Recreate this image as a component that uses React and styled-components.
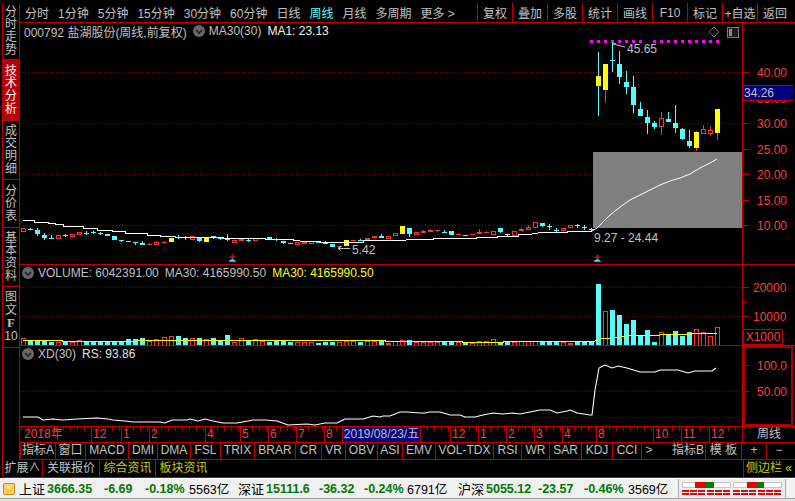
import React from 'react';
import styled, { createGlobalStyle } from 'styled-components';

const FONT = `"Liberation Sans", "Noto Sans CJK SC", sans-serif`;
const RED = '#c00000';
const GRID = '#900000';
const CYAN = '#54fcfc';
const TEXT = '#c0c0c0';
const LABEL_RED = '#ff3c3c';

const GlobalStyle = createGlobalStyle`
  html, body {
    margin: 0;
    background: #000;
  }
`;

const Screen = styled.div`
  width: 795px;
  height: 501px;
  overflow: hidden;
  background: #000;
  font-family: ${FONT};
  font-size: 12px;
  color: ${TEXT};
`;

const Workspace = styled.div`
  display: flex;
  height: 460px;
  padding-left: 2px;
  box-sizing: border-box;
`;

const Sidebar = styled.div`
  width: 18px;
  margin-top: 3px;
  box-sizing: border-box;
  border-left: 1px solid ${RED};
  border-right: 1px solid ${RED};
  flex: none;
`;

const SideTab = styled.div`
  height: ${(p) => p.$h}px;
  box-sizing: border-box;
  border-bottom: 1px solid ${RED};
  display: flex;
  flex-direction: column;
  align-items: center;
  justify-content: center;
  line-height: 12.6px;
  font-size: 12px;
  color: ${(p) => (p.$active ? '#fff' : TEXT)};
  background: ${(p) => (p.$active ? '#b80000' : 'transparent')};
`;

const SideBoldF = styled.span`
  font-family: "Liberation Serif", serif;
  font-weight: bold;
  font-size: 13px;
  line-height: 14px;
`;

const MainColumn = styled.div`
  flex: 1;
  padding-top: 3px;
  display: flex;
  flex-direction: column;
  min-width: 0;
`;

const Toolbar = styled.div`
  height: 20px;
  flex: none;
  box-sizing: border-box;
  border-bottom: 1px solid ${RED};
  display: flex;
  align-items: center;
  padding: 0 3px 0 5px;
`;

const PeriodList = styled.div`
  display: flex;
  gap: 9px;
`;

const Period = styled.span`
  color: ${(p) => (p.$active ? CYAN : TEXT)};
  white-space: nowrap;
`;

const ToolGroup = styled.div`
  margin-left: auto;
  display: flex;
  align-self: stretch;
`;

const ToolCell = styled.div`
  width: 35px;
  box-sizing: border-box;
  border-left: 1px solid ${RED};
  display: flex;
  align-items: center;
  justify-content: center;
  white-space: nowrap;
`;

const Pane = styled.div`
  height: ${(p) => p.$h}px;
  flex: none;
  box-sizing: border-box;
  border-bottom: 1px solid ${RED};
  display: flex;
`;

const ChartArea = styled.div`
  width: 722px;
  position: relative;
  flex: none;
`;

const ChartSvg = styled.svg`
  display: block;
`;

const PaneHeader = styled.div`
  position: absolute;
  top: 0;
  left: 2px;
  height: 16px;
  display: flex;
  align-items: center;
  gap: 6px;
  white-space: nowrap;
`;

const ChevronSvg = styled.svg`
  display: block;
  margin-right: -2px;
`;

const HeadText = styled.span`
  color: ${(p) => p.$color || TEXT};
  margin-left: ${(p) => p.$gap || 0}px;
`;

const Axis = styled.div`
  flex: 1;
  box-sizing: border-box;
  border-left: 1px solid ${RED};
  position: relative;
`;

const PriceTag = styled.div`
  position: absolute;
  left: 0;
  right: 2px;
  top: 62px;
  height: 16px;
  box-sizing: border-box;
  background: #000080;
  border-top: 1px solid ${RED};
  border-bottom: 1px solid ${RED};
  padding-left: 1px;
  line-height: 14px;
`;

const ScaleBadge = styled.div`
  position: absolute;
  left: 0;
  bottom: 0;
  width: 40px;
  height: 16px;
  box-sizing: border-box;
  border: 1px solid ${RED};
  color: ${LABEL_RED};
  text-align: center;
  line-height: 14px;
`;

const AxisFrame = styled.div`
  position: absolute;
  left: 0;
  right: 2px;
  top: 0;
  bottom: 0;
  border: 2px solid #a80000;
`;

const AxisLabel = styled.text`
  fill: ${LABEL_RED};
  font-family: ${FONT};
  font-size: 12px;
`;

const Note = styled.text`
  fill: ${TEXT};
  font-family: ${FONT};
  font-size: 12px;
`;

const DateRow = styled.div`
  height: 16px;
  flex: none;
  box-sizing: border-box;
  border-bottom: 1px solid ${RED};
  display: flex;
`;

const DateScale = styled.div`
  width: 722px;
  flex: none;
  display: flex;
  background: repeating-linear-gradient(90deg, ${RED} 0 1px, transparent 1px 7px) 1px 0 / 100% 4px no-repeat;
`;

const DateCell = styled.div`
  width: ${(p) => p.$w}px;
  flex: none;
  box-sizing: border-box;
  border-left: ${(p) => (p.$first ? 'none' : `1px solid ${RED}`)};
  padding-left: ${(p) => (p.$first ? 4 : 1)}px;
  color: ${LABEL_RED};
  line-height: 15px;
  white-space: nowrap;
`;

const DateCursor = styled(DateCell)`
  background: #000080;
  color: ${TEXT};
  text-align: center;
  padding-left: 0;
`;

const PeriodCell = styled.div`
  flex: 1;
  border-left: 1px solid ${RED};
  text-align: center;
  line-height: 15px;
`;

const TabRow = styled.div`
  height: 17px;
  flex: none;
  box-sizing: border-box;
  border-bottom: 1px solid ${RED};
  display: flex;
`;

const TabCell = styled.div`
  width: ${(p) => p.$w}px;
  flex: none;
  box-sizing: border-box;
  border-left: 1px solid ${RED};
  text-align: center;
  line-height: 15px;
  white-space: nowrap;
`;

const TabSpacer = styled.div`
  flex: none;
  width: ${(p) => p.$w}px;
  box-sizing: border-box;
  text-align: right;
  padding-right: 1px;
  line-height: 15px;
`;

const ExtBar = styled.div`
  height: 18px;
  margin-left: 2px;
  box-sizing: border-box;
  border-bottom: 1px solid ${RED};
  display: flex;
`;

const ExtCell = styled.div`
  width: ${(p) => p.$w}px;
  flex: none;
  box-sizing: border-box;
  border-left: 1px solid ${RED};
  text-align: center;
  line-height: 16px;
  color: ${(p) => (p.$accent ? '#c8c800' : TEXT)};
  white-space: nowrap;
`;

const SideToggle = styled(ExtCell)`
  margin-left: auto;
  flex: 1;
  max-width: 51px;
  margin-right: 1px;
`;

const StatusBar = styled.div`
  height: 21px;
  box-sizing: border-box;
  background: #f0f0f0;
  border-top: 1px solid #fff;
  border-bottom: 1px solid #a0a0a0;
  display: flex;
  align-items: center;
  padding-left: 3px;
  color: #000;
  white-space: nowrap;
`;

const StatusEdge = styled.div`
  height: 2px;
  background: #e4e4e4;
`;

const StatusIcon = styled.div`
  width: 12px;
  height: 12px;
  flex: none;
  margin-right: 4px;
  box-sizing: border-box;
  border: 1px solid #c88a10;
  border-radius: 2px;
  background: linear-gradient(#ffe9a0, #f6b030);
  box-shadow: inset 0 0 0 2px #ffcf60;
`;

const Quote = styled.div`
  display: grid;
  grid-template-columns: ${(p) => p.$cols};
  align-items: center;
  flex: none;
`;

const QuoteName = styled.span`
  font-size: 13px;
`;

const QuoteNum = styled.span`
  color: #007800;
  font-weight: bold;
  font-size: 12.5px;
`;

const QuoteAmount = styled.span`
  font-size: 12.5px;
`;

const Breadth = styled.div`
  width: 108px;
  box-sizing: border-box;
  align-self: stretch;
  border-left: 1px solid #a8a8a8;
  border-right: 1px solid #a8a8a8;
  display: flex;
  gap: 2px;
  padding: 3px 0 0 3px;
`;

const Meter = styled.div`
  width: 49px;
`;

const MeterTop = styled.div`
  height: 6px;
  box-sizing: border-box;
  border: 1px solid #c8c8c8;
  background: #fff;
  display: flex;
  padding-left: ${(p) => p.$offset}px;
`;

const MeterPart = styled.div`
  height: 6px;
  margin-top: -1px;
  width: ${(p) => p.$w}px;
  background: ${(p) => p.$color};
`;

const MeterDashes = styled.div`
  height: 2px;
  margin-top: ${(p) => p.$gap}px;
  background: repeating-linear-gradient(90deg, #f00000 0 7px, transparent 7px 8.2px);
`;

const chars = (s) => [...s].map((ch, i) => <span key={i}>{ch}</span>);

// [kind, top, bottom, high, low, wick colour], y in page pixels
const CANDLES = [
  ['r', 228, 232], ['c', 229, 230, 228, 230], ['c', 230, 234, 228, 236], ['c', 235, 238, 233, 240], ['c', 238, 239, 235, 239],
  ['r', 235, 239], ['c', 235, 236, 234, 237], ['r', 234, 237], ['r', 232, 235], ['c', 233, 234, 231, 235],
  ['c', 232, 233, 231, 234], ['c', 233, 234, 232, 235], ['c', 234, 236], ['c', 236, 240], ['c', 240, 241, 240, 242],
  ['c', 241, 242], ['c', 242, 243, 242, 245], ['c', 243, 245, 241, 245], ['R', 244, 245, 243, 245], ['r', 242, 245, 241, 245],
  ['R', 242, 243, 241, 243], ['y', 238, 242], ['c', 237, 238, 235, 239], ['c', 237, 238, 236, 240], ['r', 236, 240],
  ['c', 237, 241, 237, 242], ['y', 238, 242], ['c', 236, 238, 236, 239], ['c', 237, 239, 237, 240], ['c', 238, 240, 234, 241],
  ['r', 240, 243], ['r', 239, 241], ['c', 240, 241, 238, 242], ['r', 238, 241], ['R', 238, 239], ['c', 237, 239],
  ['c', 239, 240, 238, 241], ['c', 241, 243, 241, 244], ['c', 243, 244], ['r', 242, 245],
  ['R', 242, 244], ['r', 241, 244], ['c', 241, 243], ['c', 243, 244, 241, 244], ['c', 244, 247], ['R', 246, 247, 246, 248],
  ['y', 240, 246], ['R', 240, 241], ['c', 240, 241, 239, 241], ['r', 238, 240], ['R', 236, 238, 236, 239], ['c', 236, 238, 234, 238],
  ['r', 236, 239], ['r', 233, 236], ['y', 226, 234], ['c', 228, 234, 228, 237], ['r', 232, 235], ['R', 231, 233, 230, 233],
  ['R', 230, 232, 229, 232], ['R', 230, 231, 230, 232], ['c', 232, 233, 230, 233], ['c', 231, 235], ['R', 234, 235], ['c', 235, 236],
  ['R', 234, 235], ['R', 232, 234, 229, 234], ['R', 232, 233, 231, 233], ['r', 231, 235], ['c', 228, 232, 228, 233], ['w', 234, 235, 234, 236],
  ['r', 231, 236], ['R', 229, 231, 228, 231], ['r', 227, 230, 225, 230], ['r', 222, 228], ['c', 223, 226, 223, 227],
  ['c', 226, 227, 224, 230], ['c', 230, 231, 228, 232], ['r', 228, 231], ['r', 225, 228], ['c', 225, 226, 224, 228],
  ['c', 227, 228, 225, 230], ['c', 229, 230, 228, 231],
  ['y', 76, 86, 52, 116, CYAN], ['y', 64, 90, 64, 103, '#ff3232'], ['c', 60, 61, 42, 72], ['c', 64, 77, 51, 84], ['c', 82, 87, 71, 94],
  ['c', 87, 105, 76, 113], ['c', 109, 116, 102, 116], ['c', 117, 123, 110, 134], ['c', 123, 127, 121, 129], ['r', 118, 127, 112, 135],
  ['c', 119, 122, 112, 122], ['c', 123, 128, 105, 133], ['c', 129, 139, 128, 140], ['c', 141, 146, 130, 148],
  ['y', 132, 148, 131, 151, '#ff3232'], ['r', 129, 134, 125, 134], ['r', 130, 134, 126, 136], ['y', 109, 133, 109, 140, '#ff3232'],
];

// volume bar tops; bars sit on y = 345
const VOLUMES = [
  ['r', 338], ['c', 341], ['c', 341], ['c', 341], ['c', 342], ['r', 342], ['c', 341], ['r', 342], ['r', 340], ['c', 341],
  ['c', 341], ['c', 341], ['c', 341], ['c', 341], ['c', 341], ['c', 339], ['c', 339], ['c', 338], ['r', 341], ['r', 339],
  ['r', 337], ['r', 336], ['c', 336], ['c', 338], ['r', 338], ['c', 338], ['r', 339], ['c', 338], ['c', 340], ['c', 335],
  ['r', 342], ['r', 338], ['c', 341], ['r', 339], ['r', 341], ['c', 342], ['c', 341], ['c', 341], ['c', 342], ['r', 342],
  ['r', 342], ['r', 342], ['c', 343], ['c', 342], ['c', 342], ['r', 342], ['r', 341], ['r', 341], ['c', 342], ['r', 341],
  ['r', 341], ['c', 341], ['R', 343], ['r', 341], ['r', 340], ['c', 340], ['r', 342], ['r', 342], ['r', 342], ['r', 342],
  ['c', 342], ['c', 342], ['r', 342], ['c', 343], ['r', 343], ['r', 341], ['r', 341], ['r', 339], ['c', 342], ['c', 341],
  ['r', 342], ['r', 341], ['r', 341], ['r', 341], ['c', 342], ['c', 342], ['c', 342], ['r', 342], ['R', 343], ['c', 342],
  ['c', 342], ['c', 342], ['c', 284], ['r', 311], ['c', 310], ['c', 315], ['c', 324], ['c', 320], ['c', 335], ['c', 330],
  ['c', 342], ['r', 332], ['c', 334], ['c', 331], ['c', 336], ['c', 332], ['r', 329], ['r', 332], ['r', 336], ['r', 327],
];

const toPoints = (list) => list.map((p) => p.join(',')).join(' ');

const MA_LINE = toPoints([
  [23, 220], [34, 220], [34, 222], [48, 222], [48, 223], [55, 223], [55, 224], [63, 224], [63, 226], [83, 226], [83, 228],
  [97, 228], [97, 230], [112, 230], [112, 231], [125, 231], [125, 233], [147, 233], [147, 235], [160, 235], [160, 236],
  [175, 236], [175, 237], [223, 237], [223, 238], [265, 238], [265, 239], [293, 239], [293, 240], [300, 241], [320, 241],
  [320, 242], [363, 242], [363, 241], [406, 240], [406, 239], [433, 239], [433, 238], [476, 238], [476, 237], [497, 237],
  [497, 236], [518, 236], [518, 235], [532, 234], [538, 233], [553, 232], [567, 232], [567, 231], [592, 231],
]);

const RISE_LINE = toPoints([
  [592, 231], [597, 228], [603, 222], [610, 215], [620, 207], [630, 200], [640, 195], [650, 190], [660, 185],
  [670, 181], [680, 178], [690, 174], [700, 168], [710, 163], [717, 159],
]);

const VOLUME_MA = toPoints([
  [23, 340], [62, 340], [62, 341], [137, 341], [137, 340], [385, 340], [385, 341], [462, 341], [462, 342], [503, 342],
  [503, 341], [595, 341], [600, 339], [610, 338], [620, 337], [625, 336], [635, 335], [660, 335], [665, 334.5], [690, 334.5],
  [692, 333], [717, 333],
]);

const XD_LINE = toPoints([
  [23, 417], [38, 417], [43, 420], [53, 419], [63, 420], [77, 419], [97, 418], [108, 419], [113, 420], [125, 421], [133, 422],
  [160, 422], [165, 423], [172, 420], [187, 420], [190, 419], [198, 421], [205, 419], [213, 421], [223, 423], [237, 423],
  [253, 420], [265, 420], [277, 421], [288, 425], [307, 424], [315, 425], [325, 423], [337, 423], [345, 419], [363, 419],
  [373, 416], [380, 417], [383, 416], [390, 416], [400, 412], [407, 412], [420, 413], [425, 413], [430, 412], [440, 412],
  [450, 415], [460, 415], [465, 417], [475, 417], [483, 415], [493, 413], [503, 414], [513, 413], [520, 414], [530, 412],
  [540, 410], [550, 410], [557, 413], [567, 411], [570, 410], [577, 413], [590, 415], [592, 415], [595, 390], [599, 368],
  [605, 365], [612, 368], [618, 366], [627, 368], [640, 372], [655, 372], [660, 370], [678, 370], [688, 373], [695, 371],
  [712, 371], [716, 368],
]);

const candleX = (i) => Math.round(23.3 + i * 7.01);

const FILL = { c: CYAN, y: '#ffff00', R: '#ff3232', w: '#fff' };

const Candle = ({ i, data }) => {
  const [kind, top, bottom, high, low, wick] = data;
  const x = candleX(i);
  const color = kind === 'r' ? '#ff3232' : FILL[kind];
  return (
    <g>
      {high !== undefined && (
        <rect x={x} y={high} width={1} height={low - high} fill={wick || color} />
      )}
      {kind === 'r' ? (
        <rect x={x - 1.5} y={top + 0.5} width={4} height={bottom - top - 1} fill="#000" stroke={color} />
      ) : (
        <rect x={x - 2} y={top} width={5} height={bottom - top} fill={color} />
      )}
    </g>
  );
};

const VolumeBar = ({ i, data }) => {
  const [kind, top] = data;
  const x = candleX(i);
  if (kind === 'r') {
    return <rect x={x - 1.5} y={top + 0.5} width={4} height={345 - top} fill="#000" stroke="#ff3232" />;
  }
  return <rect x={x - 2} y={top} width={5} height={346 - top} fill={FILL[kind]} />;
};

const GridLine = ({ y }) => (
  <line x1={20} x2={742} y1={y + 0.5} y2={y + 0.5} stroke={GRID} strokeDasharray="1 2" />
);

const Tick = ({ y, long }) => (
  <line x1={743} x2={long ? 749 : 747} y1={y + 0.5} y2={y + 0.5} stroke={RED} />
);

const Chevron = () => (
  <ChevronSvg width="12" height="12" viewBox="0 0 12 12">
    <circle cx="6" cy="6" r="6" fill="#666" />
    <polyline points="3,5 6,8 9,5" fill="none" stroke="#222" strokeWidth="1.6" />
  </ChevronSvg>
);

const Marker = ({ x }) => (
  <g>
    <polygon points={`${x},254 ${x + 3.5},258 ${x - 3.5},258`} fill="#d00000" />
    <polygon points={`${x},258 ${x + 4},262 ${x - 4},262`} fill="#2aa8e8" />
    <line x1={x - 3} x2={x + 3} y1={260.5} y2={260.5} stroke={CYAN} strokeDasharray="1 1" />
  </g>
);

const DOTS = Array.from({ length: 19 }, (_, k) => k).filter((k) => k !== 8);

const PriceChart = () => (
  <ChartSvg width="722" height="241" viewBox="20 23 722 241" shapeRendering="crispEdges">
    {[72, 123, 174, 225].map((y) => <GridLine key={y} y={y} />)}
    <polygon points="714,27 719,32 714,37 709,32" fill="none" stroke="#707070" shapeRendering="auto" />
    <rect x="727.5" y="27.5" width="11" height="10" rx="1" fill="#1c1c1c" stroke="#7a7a7a" />
    <rect x="729" y="29" width="3" height="7" fill="#8a8a8a" />
    {DOTS.map((k) => <rect key={k} x={589.5 + k * 7} y={40} width={3} height={3} fill="#ff00ff" />)}
    {CANDLES.map((d, i) => <Candle key={i} i={i} data={d} />)}
    <rect x="593" y="152" width="149" height="76" fill="#808080" />
    <polyline points={MA_LINE} fill="none" stroke="#fff" />
    <polyline points={RISE_LINE} fill="none" stroke="#fff" shapeRendering="auto" />
    <g shapeRendering="auto">
      <polyline points="625,47 613,44 616,43 M613,44 615,47" fill="none" stroke={TEXT} />
      <polyline points="350,248.5 338,248.5 341,246.5 338,248.5 341,250.5" fill="none" stroke={TEXT} />
      <Note x="627" y="53">45.65</Note>
      <Note x="352" y="254">5.42</Note>
      <Note x="594" y="242">9.27 - 24.44</Note>
    </g>
    <g shapeRendering="auto">
      <Marker x={232.5} />
      <Marker x={597.5} />
    </g>
  </ChartSvg>
);

const VolumeChart = () => (
  <ChartSvg width="722" height="80" viewBox="20 265 722 80" shapeRendering="crispEdges">
    <GridLine y={287} />
    <GridLine y={316} />
    {VOLUMES.map((d, i) => <VolumeBar key={i} i={i} data={d} />)}
    <polyline points={VOLUME_MA} fill="none" stroke="#ffff00" />
  </ChartSvg>
);

const XdChart = () => (
  <ChartSvg width="722" height="80" viewBox="20 346 722 80">
    <g shapeRendering="crispEdges">
      <GridLine y={391} />
      <GridLine y={417} />
    </g>
    <polyline points={XD_LINE} fill="none" stroke="#fff" strokeWidth="1.1" />
  </ChartSvg>
);

const PRICE_TICKS = [
  [72, '40.00'], [98, '35.00'], [123, '30.00'], [149, '25.00'], [174, '20.00'], [200, '15.00'], [225, '10.00'],
];

const PriceAxis = () => (
  <ChartSvg width="52" height="241" viewBox="743 23 52 241">
    <g shapeRendering="crispEdges">
      {PRICE_TICKS.map(([y]) => <Tick key={y} y={y} long />)}
    </g>
    {PRICE_TICKS.map(([y, label]) => <AxisLabel key={y} x="757" y={y + 5}>{label}</AxisLabel>)}
  </ChartSvg>
);

const VolumeAxis = () => (
  <ChartSvg width="52" height="80" viewBox="743 265 52 80">
    <g shapeRendering="crispEdges">
      <Tick y={287} long />
      <Tick y={302} />
      <Tick y={316} long />
    </g>
    <AxisLabel x="753" y="292">20000</AxisLabel>
    <AxisLabel x="753" y="321">10000</AxisLabel>
  </ChartSvg>
);

const XdAxis = () => (
  <ChartSvg width="52" height="80" viewBox="743 346 52 80">
    <g shapeRendering="crispEdges">
      <Tick y={365} long />
      <Tick y={378} />
      <Tick y={391} long />
    </g>
    <AxisLabel x="757" y="370">100.0</AxisLabel>
    <AxisLabel x="757" y="396">50.00</AxisLabel>
  </ChartSvg>
);

const DATE_CELLS = [
  ['2018年', 71], ['12', 30], ['1', 28], ['2', 56], ['4', 35], ['5', 28], ['6', 28], ['7', 28], ['8', 18],
];
const DATE_CELLS_AFTER = [
  ['', 30], ['12', 28], ['1', 28], ['2', 28], ['3', 28], ['4', 34], ['8', 57], ['10', 28], ['11', 28], ['12', 33],
];

const INDICATOR_TABS = [
  ['指标A', 35], ['窗口', 30], ['MACD', 43], ['DMI', 29], ['DMA', 33], ['FSL', 30], ['TRIX', 34], ['BRAR', 41], ['CR', 26],
  ['VR', 24], ['OBV', 32], ['ASI', 25], ['EMV', 33], ['VOL-TDX', 58], ['RSI', 28], ['WR', 28], ['SAR', 32], ['KDJ', 31], ['CCI', 29],
];

const App = () => (
  <Screen>
    <GlobalStyle />
    <Workspace>
      <Sidebar>
        <SideTab $h={57}>{chars('分时走势')}</SideTab>
        <SideTab $h={61} $active>{chars('技术分析')}</SideTab>
        <SideTab $h={59}>{chars('成交明细')}</SideTab>
        <SideTab $h={48}>{chars('分价表')}</SideTab>
        <SideTab $h={59}>{chars('基本资料')}</SideTab>
        <SideTab $h={61}>
          {chars('图文')}
          <SideBoldF>F</SideBoldF>
          <span>10</span>
        </SideTab>
      </Sidebar>
      <MainColumn>
        <Toolbar>
          <PeriodList>
            <Period>分时</Period>
            <Period>1分钟</Period>
            <Period>5分钟</Period>
            <Period>15分钟</Period>
            <Period>30分钟</Period>
            <Period>60分钟</Period>
            <Period>日线</Period>
            <Period $active>周线</Period>
            <Period>月线</Period>
            <Period>多周期</Period>
            <Period>更多 &gt;</Period>
          </PeriodList>
          <ToolGroup>
            <ToolCell>复权</ToolCell>
            <ToolCell>叠加</ToolCell>
            <ToolCell>多股</ToolCell>
            <ToolCell>统计</ToolCell>
            <ToolCell>画线</ToolCell>
            <ToolCell>F10</ToolCell>
            <ToolCell>标记</ToolCell>
            <ToolCell>+自选</ToolCell>
            <ToolCell>返回</ToolCell>
          </ToolGroup>
        </Toolbar>
        <Pane $h={242}>
          <ChartArea>
            <PriceChart />
            <PaneHeader>
              <HeadText $gap={2}>000792 盐湖股份(周线,前复权)</HeadText>
              <Chevron />
              <HeadText>MA30(30)</HeadText>
              <HeadText $color="#f0f0f0">MA1: 23.13</HeadText>
            </PaneHeader>
          </ChartArea>
          <Axis>
            <PriceAxis />
            <PriceTag>34.26</PriceTag>
          </Axis>
        </Pane>
        <Pane $h={81}>
          <ChartArea>
            <VolumeChart />
            <PaneHeader>
              <Chevron />
              <HeadText>VOLUME: 6042391.00</HeadText>
              <HeadText>MA30: 4165990.50</HeadText>
              <HeadText $color="#ffff00">MA30: 4165990.50</HeadText>
            </PaneHeader>
          </ChartArea>
          <Axis>
            <VolumeAxis />
            <ScaleBadge>X1000</ScaleBadge>
          </Axis>
        </Pane>
        <Pane $h={81}>
          <ChartArea>
            <XdChart />
            <PaneHeader>
              <Chevron />
              <HeadText>XD(30)</HeadText>
              <HeadText $color="#e0e0e0">RS: 93.86</HeadText>
            </PaneHeader>
          </ChartArea>
          <Axis>
            <XdAxis />
            <AxisFrame />
          </Axis>
        </Pane>
        <DateRow>
          <DateScale>
            {DATE_CELLS.map(([label, w], i) => (
              <DateCell key={i} $w={w} $first={i === 0}>{label}</DateCell>
            ))}
            <DateCursor $w={78}>2019/08/23/五</DateCursor>
            {DATE_CELLS_AFTER.map(([label, w], i) => (
              <DateCell key={i} $w={w}>{label}</DateCell>
            ))}
          </DateScale>
          <PeriodCell>周线</PeriodCell>
        </DateRow>
        <TabRow>
          {INDICATOR_TABS.map(([label, w]) => <TabCell key={label} $w={w}>{label}</TabCell>)}
          <TabCell $w={15}>&gt;</TabCell>
          <TabSpacer $w={49}>指标B</TabSpacer>
          <TabCell $w={36}>模 板</TabCell>
          <TabCell $w={25}>+</TabCell>
          <TabCell $w={25}>−</TabCell>
        </TabRow>
      </MainColumn>
    </Workspace>
    <ExtBar>
      <ExtCell $w={40}>扩展∧</ExtCell>
      <ExtCell $w={57}>关联报价</ExtCell>
      <ExtCell $w={56} $accent>综合资讯</ExtCell>
      <ExtCell $w={56} $accent>板块资讯</ExtCell>
      <SideToggle $accent>侧边栏 «</SideToggle>
    </ExtBar>
    <StatusBar>
      <StatusIcon />
      <Quote $cols="28px 57px 41px 44px 49px">
        <QuoteName>上证</QuoteName>
        <QuoteNum>3666.35</QuoteNum>
        <QuoteNum>-6.69</QuoteNum>
        <QuoteNum>-0.18%</QuoteNum>
        <QuoteAmount>5563亿</QuoteAmount>
      </Quote>
      <Quote $cols="28px 53px 45px 43px 51px">
        <QuoteName>深证</QuoteName>
        <QuoteNum>15111.6</QuoteNum>
        <QuoteNum>-36.32</QuoteNum>
        <QuoteNum>-0.24%</QuoteNum>
        <QuoteAmount>6791亿</QuoteAmount>
      </Quote>
      <Quote $cols="28px 52px 46px 44px 50px">
        <QuoteName>沪深</QuoteName>
        <QuoteNum>5055.12</QuoteNum>
        <QuoteNum>-23.57</QuoteNum>
        <QuoteNum>-0.46%</QuoteNum>
        <QuoteAmount>3569亿</QuoteAmount>
      </Quote>
      <Breadth>
        <Meter>
          <MeterTop $offset={12}>
            <MeterPart $w={11} $color="#f00000" />
            <MeterPart $w={8} $color="#008000" />
          </MeterTop>
          <MeterDashes $gap={2} />
          <MeterDashes $gap={1} />
        </Meter>
        <Meter>
          <MeterTop $offset={13}>
            <MeterPart $w={10} $color="#f00000" />
            <MeterPart $w={7} $color="#008000" />
          </MeterTop>
          <MeterDashes $gap={2} />
          <MeterDashes $gap={1} />
        </Meter>
      </Breadth>
    </StatusBar>
    <StatusEdge />
  </Screen>
);

export default App;
